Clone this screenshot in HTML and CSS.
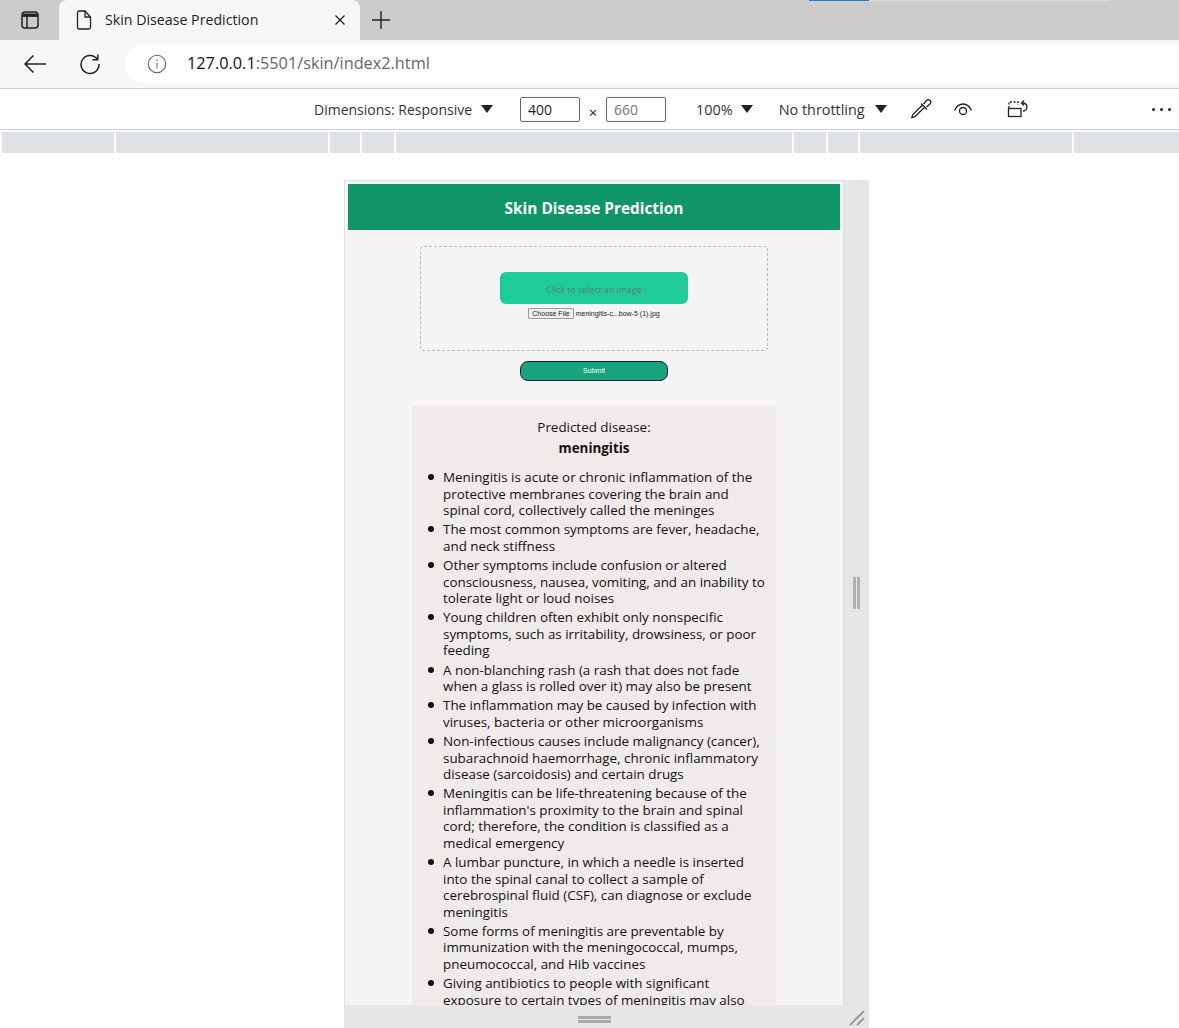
FILE: index.html
```html
<!DOCTYPE html>
<html lang="en">
<head>
  <meta charset="UTF-8">
  <title>Skin Disease Prediction</title>
  <link rel="stylesheet" href="styles.css">
</head>
<body>
  <!-- browser tabs -->
  <div class="tabbar">
    <div class="top-strip"><span class="strip-blue"></span><span class="strip-grey"></span></div>
    <div class="side-btn">
      <svg width="20" height="20" viewBox="0 0 20 20" fill="none" stroke="#222" stroke-width="1.5">
        <rect x="2" y="2" width="16" height="16" rx="3"/>
        <path d="M2.5 5.2h15" stroke-width="3.4"/>
        <path d="M7 6v12"/>
      </svg>
    </div>
    <div class="tab">
      <svg class="tab-file" width="16" height="20" viewBox="0 0 16 20" fill="none" stroke="#222" stroke-width="1.3">
        <path d="M3 1h6l5.500 6v10.500a1.500 1.500 0 0 1-1.500 1.500H3a1.500 1.500 0 0 1-1.500-1.500v-15A1.500 1.500 0 0 1 3 1z"/>
        <path d="M9 1v6h5.500"/>
      </svg>
      <span class="tab-title">Skin Disease Prediction</span>
      <svg width="12" height="12" viewBox="0 0 12 12" stroke="#222" stroke-width="1.300"><path d="M1.500 1.500l9 9M10.500 1.500l-9 9"/></svg>
    </div>
    <svg class="new-tab" width="18" height="18" viewBox="0 0 18 18" stroke="#222" stroke-width="1.400"><path d="M9 0v18M0 9h18"/></svg>
  </div>

  <!-- address bar -->
  <div class="addressbar">
    <svg class="nav-back" width="24" height="20" viewBox="0 0 24 20" fill="none" stroke="#222" stroke-width="1.500"><path d="M23 10H2M10.500 1.500L2 10l8.500 8.500"/></svg>
    <svg class="nav-reload" width="22" height="22" viewBox="0 0 22 22" fill="none" stroke="#222" stroke-width="1.500">
      <path d="M18.500 6.500A9 9 0 1 0 20 11"/>
      <path d="M13.500 6.800h5.300V1.500"/>
    </svg>
    <div class="omnibox">
      <svg width="20" height="20" viewBox="0 0 20 20" fill="none" stroke="#666" stroke-width="1.100">
        <circle cx="10" cy="10" r="8.700"/>
        <path d="M10 8.800v5.600M10 5.400v1.500"/>
      </svg>
      <span class="url"><span class="url-host">127.0.0.1</span>:5501/skin/index2.html</span>
    </div>
  </div>

  <!-- device toolbar -->
  <div class="devicebar">
    <span class="dev-label dev-dimensions">Dimensions: Responsive</span>
    <span class="caret caret-dim"></span>
    <span class="dev-input">400</span>
    <span class="dev-times">×</span>
    <span class="dev-input dev-input-off">660</span>
    <span class="dev-label dev-zoom">100%</span>
    <span class="caret caret-zoom"></span>
    <span class="dev-label dev-throttle">No throttling</span>
    <span class="caret caret-throttle"></span>
    <svg class="dev-picker" width="22" height="22" viewBox="0 0 22 22" fill="none" stroke="#222" stroke-width="1.300">
      <path d="M12.500 7L3 16.500c-.8.8-.6 2-1.500 3.500 1.500-.9 2.700-.7 3.500-1.500L15 9"/>
      <path d="M11 5.500l6 6"/>
      <path d="M13.500 6l3-3.500a2.200 2.200 0 0 1 3.500 3.500l-3.500 3"/>
    </svg>
    <svg class="dev-eye" width="20" height="16" viewBox="0 0 20 16" fill="none" stroke="#222" stroke-width="1.300">
      <path d="M1.500 9.500C3.500 5 6.500 3 10 3s6.500 2 8.500 6.500"/>
      <circle cx="10" cy="10" r="3.500"/>
    </svg>
    <svg class="dev-rotate" width="22" height="20" viewBox="0 0 22 20" fill="none" stroke="#222" stroke-width="1.300">
      <path d="M2 9V3h9v3" stroke-dasharray="2 1.500"/>
      <rect x="1.500" y="9.500" width="12.500" height="8"/>
      <path d="M15 4c3 0 5 1.500 5 4s-2 4-4 4"/>
      <path d="M17 1.500L14.500 4 17 6.500"/>
    </svg>
    <span class="dev-more"><i></i><i></i><i></i></span>
  </div>

  <!-- media query ruler -->
  <div class="ruler">
    <span></span><span></span><span></span><span></span><span></span><span></span><span></span><span></span><span></span>
  </div>

  <div class="stage">
    <div class="device">
      <div class="viewport">
        <h1 class="page-title">Skin Disease Prediction</h1>

        <form class="upload-form">
          <div class="dropzone">
            <label class="select-btn">Click to select an image</label>
            <div class="file-row">
              <span class="file-btn">Choose File</span>
              <span class="file-name">meningitis-c...bow-5 (1).jpg</span>
            </div>
          </div>
          <button type="button" class="submit-btn">Submit</button>
        </form>

        <div class="result">
          <p class="result-label">Predicted disease:</p>
          <p class="result-name">meningitis</p>
          <ul class="result-list">
            <li>Meningitis is acute or chronic inflammation of the protective membranes covering the brain and spinal cord, collectively called the meninges</li>
            <li>The most common symptoms are fever, headache, and neck stiffness</li>
            <li>Other symptoms include confusion or altered consciousness, nausea, vomiting, and an inability to tolerate light or loud noises</li>
            <li>Young children often exhibit only nonspecific symptoms, such as irritability, drowsiness, or poor feeding</li>
            <li>A non-blanching rash (a rash that does not fade when a glass is rolled over it) may also be present</li>
            <li>The inflammation may be caused by infection with viruses, bacteria or other microorganisms</li>
            <li>Non-infectious causes include malignancy (cancer), subarachnoid haemorrhage, chronic inflammatory disease (sarcoidosis) and certain drugs</li>
            <li>Meningitis can be life-threatening because of the inflammation's proximity to the brain and spinal cord; therefore, the condition is classified as a medical emergency</li>
            <li>A lumbar puncture, in which a needle is inserted into the spinal canal to collect a sample of cerebrospinal fluid (CSF), can diagnose or exclude meningitis</li>
            <li>Some forms of meningitis are preventable by immunization with the meningococcal, mumps, pneumococcal, and Hib vaccines</li>
            <li>Giving antibiotics to people with significant exposure to certain types of meningitis may also reduce the risk of developing the disease</li>
          </ul>
        </div>
      </div>

      <div class="gutter-right"><span class="grip-v"></span></div>
      <div class="gutter-bottom"><span class="grip-h"></span></div>
      <div class="gutter-corner">
        <svg width="16" height="16" viewBox="0 0 16 16" stroke="#999" stroke-width="2"><path d="M1 15L15 1M8 15l7-7"/></svg>
      </div>
    </div>
  </div>
</body>
</html>
```

FILE: styles.css
```css
/* base */
html, body {
  height: 100%;
}
body {
  margin: 0;
  height: 1028px;
  overflow: hidden;
  background-color: #fff;
  color: #222;
  font-family: "Open Sans", "Noto Sans", sans-serif;
}

/* tabs */
.tabbar {
  position: relative;
  display: flex;
  align-items: center;
  height: 40px;
  background-color: #ccc;
}
.top-strip {
  position: absolute;
  top: 0;
  left: 809px;
  display: flex;
  height: 1px;
}
.strip-blue {
  width: 60px;
  background-color: #2b7cd3;
}
.strip-grey {
  width: 241px;
  background-color: #ddd;
}
.side-btn {
  display: flex;
  justify-content: center;
  width: 59px;
}
.tab {
  display: flex;
  align-items: center;
  width: 301px;
  height: 40px;
  box-sizing: border-box;
  padding: 0 14px 0 17px;
  background-color: #f7f7f7;
  border-radius: 8px 8px 0 0;
}
.tab-file {
  margin-right: 13px;
}
.tab-title {
  flex: 1;
  padding-bottom: 2px;
  font-size: 14.2px;
  color: #222;
}
.new-tab {
  margin-left: 12px;
}

/* address bar */
.addressbar {
  display: flex;
  align-items: center;
  height: 48px;
  background-color: #f7f7f7;
  border-bottom: 1px solid #ccc;
}
.nav-back {
  margin-left: 23px;
}
.nav-reload {
  margin-left: 32px;
}
.omnibox {
  display: flex;
  align-items: center;
  flex: 1;
  height: 38px;
  margin-left: 24px;
  padding-left: 22px;
  background-color: #fff;
  border-radius: 19px 0 0 19px;
}
.url {
  margin-left: 20px;
  padding-bottom: 2px;
  font-size: 16.3px;
  color: #666;
}
.url-host {
  color: #111;
}

/* device toolbar */
.devicebar {
  display: flex;
  align-items: center;
  height: 40px;
  padding-left: 314px;
  border-bottom: 1px solid #ccc;
  font-size: 14px;
}
.dev-label {
  color: #333;
}
.dev-zoom, .dev-throttle {
  font-size: 14.4px;
}
.caret {
  width: 0;
  height: 0;
  border-left: 6px solid transparent;
  border-right: 6px solid transparent;
  border-top: 8px solid #222;
}
.caret-dim {
  margin: 0 27px 0 9px;
}
.dev-input {
  width: 60px;
  height: 25px;
  box-sizing: border-box;
  padding-left: 7px;
  line-height: 23px;
  border: 1px solid #666;
  border-radius: 2px;
  color: #222;
}
.dev-input-off {
  color: #777;
}
.dev-times {
  width: 26px;
  text-align: center;
  font-size: 15px;
  padding-top: 5px;
}
.dev-zoom {
  margin-left: 30px;
}
.caret-zoom {
  margin: 0 26px 0 8px;
}
.caret-throttle {
  margin: 0 23px 0 10px;
}
.dev-eye {
  margin-left: 21px;
}
.dev-rotate {
  margin-left: 34px;
}
.dev-more {
  display: flex;
  gap: 5px;
  margin-left: auto;
  margin-right: 8px;
}
.dev-more i {
  width: 3px;
  height: 3px;
  border-radius: 50%;
  background-color: #222;
}

/* media query ruler */
.ruler {
  display: grid;
  grid-template-columns: 112px 212px 30px 32px 396px 32px 30px 212px 1fr;
  gap: 2px;
  height: 21px;
  padding: 2px 0 0 2px;
  background-color: #fff;
}
.ruler span {
  background-color: #dde1e4;
}

/* responsive frame */
.stage {
  padding: 27px 0 0 344px;
}
.device {
  display: grid;
  grid-template-columns: 500px 25px;
  grid-template-rows: 825px 23px;
  width: 525px;
}
.viewport {
  overflow: hidden;
  box-sizing: border-box;
  padding: 3px;
  background-color: #f5f5f5;
  border: 1px solid #e0e0e0;
  border-bottom: 0;
}
.gutter-right {
  display: flex;
  align-items: center;
  justify-content: center;
  background-color: #e6e6e6;
}
.grip-v {
  width: 1px;
  height: 32px;
  border-left: 3px solid #b0b0b0;
  border-right: 3px solid #b0b0b0;
}
.gutter-bottom {
  display: flex;
  align-items: center;
  justify-content: center;
  background-color: #e6e6e6;
}
.grip-h {
  width: 33px;
  height: 1px;
  margin-top: 5px;
  border-top: 3px solid #aaa;
  border-bottom: 3px solid #aaa;
}
.gutter-corner {
  display: flex;
  align-items: flex-end;
  justify-content: flex-end;
  padding: 0 4px 2px 0;
  background-color: #e6e6e6;
}

/* page inside the frame */
.page-title {
  height: 46px;
  margin: 0;
  background-color: #109569;
  color: #fff;
  font-size: 15.4px;
  font-weight: 700;
  line-height: 49px;
  text-align: center;
}
.upload-form {
  display: flex;
  flex-direction: column;
  align-items: center;
  padding-top: 16px;
}
.dropzone {
  display: flex;
  flex-direction: column;
  align-items: center;
  width: 348px;
  height: 105px;
  box-sizing: border-box;
  padding-top: 25px;
  border: 1px dashed #bbb;
  border-radius: 4px;
}
.select-btn {
  width: 188px;
  height: 32px;
  background-color: #1fcc98;
  border-radius: 6px;
  color: #5f7d72;
  font-size: 8.8px;
  line-height: 36px;
  text-align: center;
}
.file-row {
  display: flex;
  align-items: center;
  gap: 2px;
  margin-top: 4px;
  font-family: "Liberation Sans", Arial, sans-serif;
  font-size: 7px;
  color: #222;
}
.file-btn {
  padding: 1px 3px;
  background-color: #efefef;
  border: 1px solid #999;
  border-radius: 1px;
}
.submit-btn {
  width: 148px;
  height: 20px;
  margin-top: 10px;
  padding: 0 0 2px;
  background-color: #18a37d;
  border: 1px solid #123;
  border-radius: 8px;
  color: #fff;
  font-family: "Liberation Sans", Arial, sans-serif;
  font-size: 7px;
  font-weight: 400;
}
.result {
  box-sizing: border-box;
  width: 364px;
  margin: 25px auto 0;
  padding: 12px 9px 0 0;
  background-color: #efebeb;
  color: #111;
  font-size: 13.4px;
  line-height: 16.5px;
}
.result-label {
  margin: 0;
  padding-left: 9px;
  line-height: 18px;
  text-align: center;
}
.result-name {
  margin: 3px 0 0;
  padding-left: 9px;
  font-weight: 700;
  line-height: 18px;
  text-align: center;
}
.result-list {
  margin: 12px 0 0;
  padding-left: 16px;
  list-style: none;
}
.result-list li {
  display: flex;
  gap: 9px;
  margin-bottom: 2.75px;
}
.result-list li::before {
  content: "";
  flex: none;
  width: 6px;
  height: 6px;
  margin-top: 5px;
  border-radius: 50%;
  background-color: #111;
}
```
